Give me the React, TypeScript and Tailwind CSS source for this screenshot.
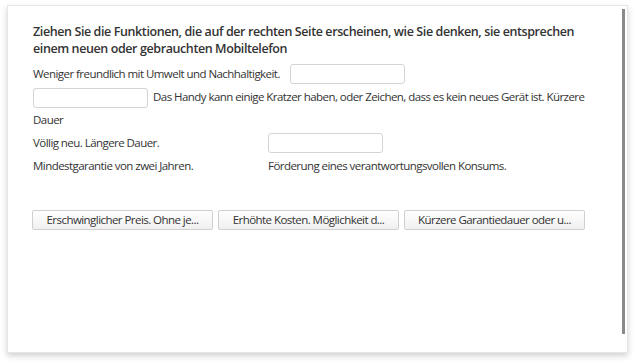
const BUTTONS = [
  'Erschwinglicher Preis. Ohne je...',
  'Erhöhte Kosten. Möglichkeit d...',
  'Kürzere Garantiedauer oder u...',
];

function Blank({ className = '' }: { className?: string }) {
  return (
    <span
      className={`inline-block align-middle w-[115px] h-[20px] bg-white border border-[#d4d4d4] rounded-[3px] ${className}`}
    />
  );
}

export default function App() {
  return (
    <div className="w-[636px] h-[364px] bg-white pt-[5px] pl-[7px] font-['Open_Sans',sans-serif] text-[#333]">
      <div className="w-[621px] h-[348px] bg-white border border-[#e6e6e6] shadow-[0_3px_6px_rgba(0,0,0,0.18)] flex">
        {/* contenido */}
        <div className="flex-1 pl-[25px] pt-[17px]">
          <h2 className="text-[12.5px] leading-[17px] font-semibold tracking-[-0.4px] text-[#333] w-[560px]">
            Ziehen Sie die Funktionen, die auf der rechten Seite erscheinen, wie Sie denken, sie entsprechen
            einem neuen oder gebrauchten Mobiltelefon
          </h2>

          <div className="mt-[5px] text-[11.5px] leading-[23px] tracking-[-0.55px]">
            <div className="flex items-center">
              <span>Weniger freundlich mit Umwelt und Nachhaltigkeit.</span>
              <Blank className="ml-[10px]" />
            </div>
            <p className="w-[560px]">
              <Blank className="mr-[5px]" />
              Das Handy kann einige Kratzer haben, oder Zeichen, dass es kein neues Gerät ist. Kürzere Dauer
            </p>
            <div className="flex items-center">
              <span className="w-[235px]">Völlig neu. Längere Dauer.</span>
              <Blank />
            </div>
            <div className="flex items-center">
              <span className="w-[235px]">Mindestgarantie von zwei Jahren.</span>
              <span>Förderung eines verantwortungsvollen Konsums.</span>
            </div>
          </div>

          <div className="mt-[33px] -ml-px flex gap-[5px]">
            {BUTTONS.map((label) => (
              <button
                key={label}
                className="w-[181px] h-[20px] px-[8px] border border-[#cfcfcf] rounded-[2px] bg-gradient-to-b from-white to-[#f0f0f0] text-[11.5px] leading-[18px] tracking-[-0.55px] text-[#333] whitespace-nowrap"
              >
                {label}
              </button>
            ))}
          </div>
        </div>

        {/* barra de desplazamiento */}
        <div className="w-[3px] h-[325px] mt-[3px] mr-[2px] bg-[#8a8a8a]" />
      </div>
    </div>
  );
}
